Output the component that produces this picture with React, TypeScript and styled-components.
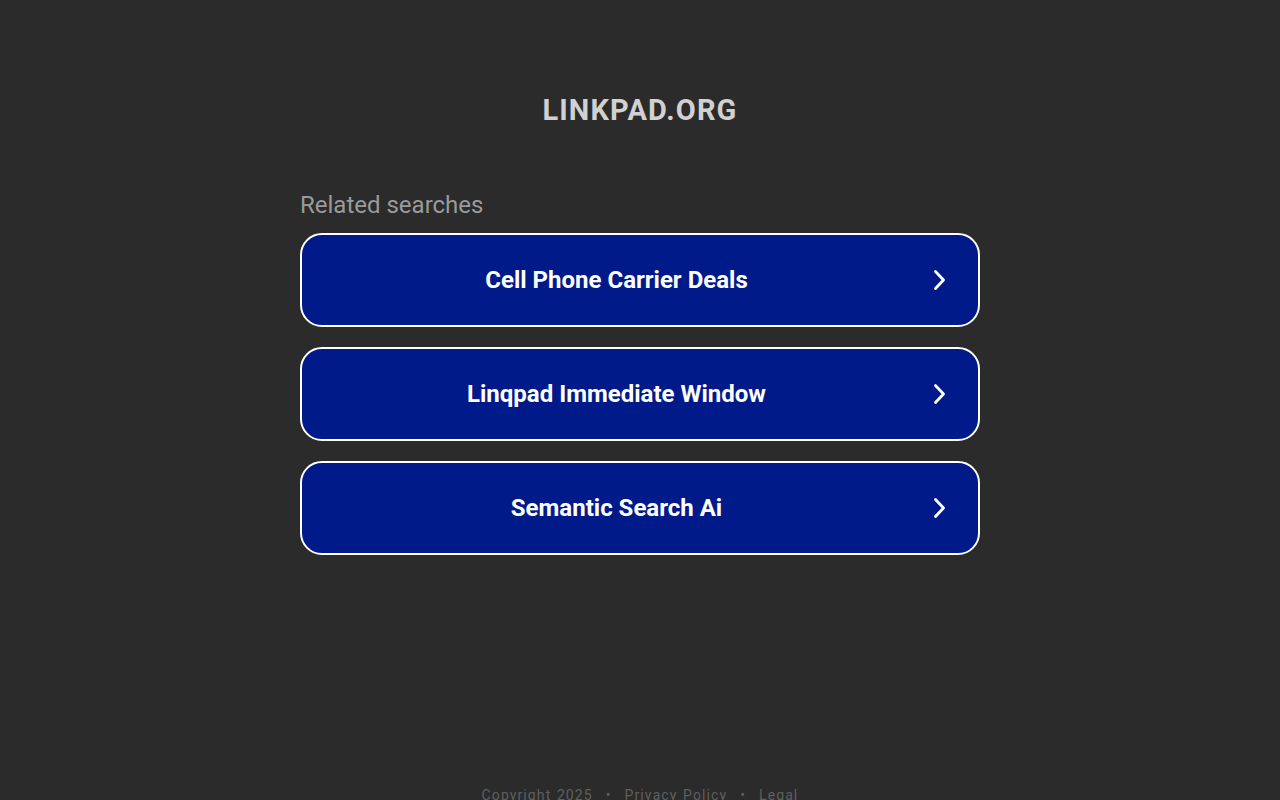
import React from "react";
import styled, { createGlobalStyle } from "styled-components";

const Global = createGlobalStyle`
  html, body { margin: 0; padding: 0; background: #2b2b2b; }
  body { font-family: Roboto, "Noto Sans", Arial, sans-serif; }
`;

const Page = styled.div`
  min-height: 800px;
  display: flex;
  flex-direction: column;
  align-items: center;
  position: relative;
`;

const Title = styled.h1`
  margin: 92px 0 0;
  height: 36px;
  font-size: 29px;
  line-height: 36px;
  font-weight: 700;
  letter-spacing: 1.1px;
  color: #d1d1d1;
`;

const Section = styled.section`
  width: 680px;
  margin-top: 62px;
  display: flex;
  flex-direction: column;
`;

const Heading = styled.div`
  font-size: 24px;
  line-height: 30px;
  color: #9a9a9a;
  margin-bottom: 13px;
`;

const List = styled.div`
  display: flex;
  flex-direction: column;
  gap: 20px;
`;

const Item = styled.a`
  box-sizing: border-box;
  height: 94px;
  border: 2px solid #ffffff;
  border-radius: 22px;
  background: #011a8a;
  display: flex;
  align-items: center;
  padding: 0 27px 0 4px;
  color: #ffffff;
  text-decoration: none;
  cursor: pointer;
`;

const Label = styled.span`
  flex: 1;
  text-align: center;
  font-size: 24px;
  font-weight: 700;
  letter-spacing: 0;
`;

const Chevron = styled.svg`
  width: 24px;
  height: 24px;
  flex: none;
`;

const Footer = styled.div`
  position: absolute;
  top: 787px;
  left: 0;
  right: 0;
  text-align: center;
  font-size: 14px;
  letter-spacing: 1.1px;
  color: #5f5f5f;
  word-spacing: 1px;
`;

const Dot = styled.span`
  margin: 0 13px;
`;

const searches = [
  "Cell Phone Carrier Deals",
  "Linqpad Immediate Window",
  "Semantic Search Ai",
];

export default function App() {
  return (
    <>
      <Global />
      <Page>
        <Title>LINKPAD.ORG</Title>
        <Section>
          <Heading>Related searches</Heading>
          <List>
            {searches.map((s) => (
              <Item key={s}>
                <Label>{s}</Label>
                <Chevron viewBox="0 0 24 24" fill="none" stroke="#fff" strokeWidth={2.8} strokeLinecap="round" strokeLinejoin="round">
                  <path d="M8.5 3.5l8 8.5-8 8.5" />
                </Chevron>
              </Item>
            ))}
          </List>
        </Section>
        <Footer>
          Copyright 2025<Dot>•</Dot>Privacy Policy<Dot>•</Dot>Legal
        </Footer>
      </Page>
    </>
  );
}
